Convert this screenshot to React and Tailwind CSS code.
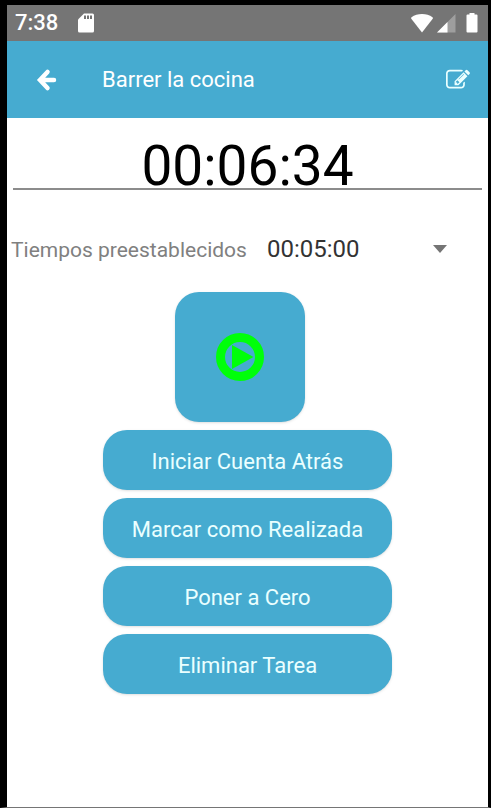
import React, { useState } from "react";

const presets = ["00:05:00", "00:10:00", "00:15:00", "00:30:00"];

const actions = [
  "Iniciar Cuenta Atrás",
  "Marcar como Realizada",
  "Poner a Cero",
  "Eliminar Tarea",
];

function StatusBar() {
  return (
    <div className="flex h-9 items-center bg-[#757575] pl-2 pr-2.5 text-white">
      <span className="text-[22px] leading-9 font-medium">7:38</span>
      {/* SD card */}
      <svg className="ml-5 h-5 w-4" viewBox="0 0 16 20" fill="currentColor">
        <path d="M6 0.500H14.500Q16 .5 16 2V18Q16 19.500 14.500 19.500H1.500Q0 19.500 0 18V6.500Z" />
        <path d="M6 2.500h2v3.500H6zM9 2.500h2v3.500H9zM12 2.500h2v3.500h-2z" fill="#757575" />
      </svg>
      <div className="ml-auto flex items-center">
        {/* Wifi */}
        <svg className="h-5 w-6" viewBox="0 0 24 20" fill="currentColor">
          <path d="M12 19.500 1.300 5.800Q.7 5 1.500 4.300Q6 1 12 1T22.500 4.300Q23.300 5 22.700 5.800Z" />
        </svg>
        {/* Signal */}
        <svg className="ml-0.5 h-5 w-5" viewBox="0 0 20 20" fill="currentColor">
          <path d="M19.500 1v18.500H1Z" opacity="0.3" />
          <path d="M11.500 9v10.500H1Z" />
        </svg>
        {/* Battery */}
        <svg className="ml-2.5 h-5 w-3" viewBox="0 0 12 20" fill="currentColor">
          <path d="M3.500 0h5v1.500h2Q11.500 1.500 11.500 2.500V18.500Q11.500 19.500 10.500 19.500H1.500Q.5 19.500 .5 18.500V2.500Q.5 1.500 1.500 1.500H3.500Z" />
        </svg>
      </div>
    </div>
  );
}

function Header() {
  return (
    <header className="flex h-[77px] items-center bg-[#46abd0] pl-7 pr-[18px] text-white">
      <button type="button" aria-label="Volver" className="flex w-6 justify-center">
        <svg
          className="h-6 w-6"
          viewBox="0 0 24 24"
          fill="none"
          stroke="currentColor"
          strokeWidth="4.5"
          strokeLinecap="round"
          strokeLinejoin="miter"
        >
          <path d="M12.500 4 5 12l7.500 8M6 12h13" />
        </svg>
      </button>
      <h1 className="ml-[43px] text-[22px] leading-7">Barrer la cocina</h1>
      <button type="button" aria-label="Editar" className="ml-auto text-[#eaffff]">
        <svg className="h-6 w-6" viewBox="0 0 1792 1792" fill="currentColor">
          <path d="M888 1184l116-116-152-152-116 116v56h96v96h56zm440-720q-16-16-33 1l-350 350q-17 17-1 33t33-1l350-350q17-17 1-33zm80 594v190q0 119-84.500 203.500t-203.500 84.500h-832q-119 0-203.500-84.500t-84.500-203.500v-832q0-119 84.500-203.500t203.500-84.500h832q63 0 117 25 15 7 18 23 3 17-9 29l-49 49q-14 14-32 8-23-6-45-6h-832q-66 0-113 47t-47 113v832q0 66 47 113t113 47h832q66 0 113-47t47-113v-126q0-13 9-22l64-64q15-15 35-7t20 29zm-96-738l288 288-672 672h-288v-288zm444 132l-92 92-288-288 92-92q28-28 68-28t68 28l152 152q28 28 28 68t-28 68z" />
        </svg>
      </button>
    </header>
  );
}

function App() {
  const [time, setTime] = useState("00:06:34");
  const [preset, setPreset] = useState("00:05:00");

  return (
    <div className="flex min-h-screen flex-col border-t-[5px] border-r-[3px] border-b border-l-[7px] border-black border-b-[#757575] bg-white font-[Roboto,sans-serif]">
      <StatusBar />
      <Header />
      <main className="flex flex-col">
        <input
          type="text"
          aria-label="Tiempo"
          value={time}
          onChange={(e) => setTime(e.target.value)}
          className="mx-1.5 mt-4 h-14 border-b-2 border-[#8c8c8c] pt-2.5 text-center text-[55px] leading-[55px] text-black outline-none"
        />

        <div className="mt-9 flex items-center pl-1 pr-6">
          <label htmlFor="preset" className="pt-0.5 text-[21px] leading-11 text-[#808080]">
            Tiempos preestablecidos
          </label>
          <div className="relative ml-5 flex-1">
            <select
              id="preset"
              value={preset}
              onChange={(e) => setPreset(e.target.value)}
              className="h-11 w-full appearance-none bg-transparent text-2xl text-[#333333] outline-none"
            >
              {presets.map((item) => (
                <option key={item} value={item}>{item}</option>
              ))}
            </select>
            <svg className="pointer-events-none absolute top-[18px] right-4 h-2 w-4" viewBox="0 0 16 8" fill="#757575">
              <path d="M1 0h14L8 8Z" />
            </svg>
          </div>
        </div>

        <button
          type="button"
          aria-label="Iniciar"
          className="mt-5 mr-4 flex size-[130px] items-center justify-center self-center rounded-3xl bg-[#46abd0] shadow-sm"
        >
          <svg className="size-12" viewBox="0 0 48 48" fill="none">
            <circle cx="24" cy="24" r="19.500" stroke="#00ff0a" strokeWidth="9" />
            <path d="M16 12 37.500 24 16 36Z" fill="#00ff0a" />
          </svg>
        </button>

        <div className="mt-2 flex w-3/5 flex-col gap-2 self-center">
          {actions.map((label) => (
            <button
              key={label}
              type="button"
              className="h-15 rounded-3xl bg-[#46abd0] pt-1 text-[22px] leading-7 text-[#eaffff] shadow-sm"
            >
              {label}
            </button>
          ))}
        </div>
      </main>
    </div>
  );
}

export default App;
